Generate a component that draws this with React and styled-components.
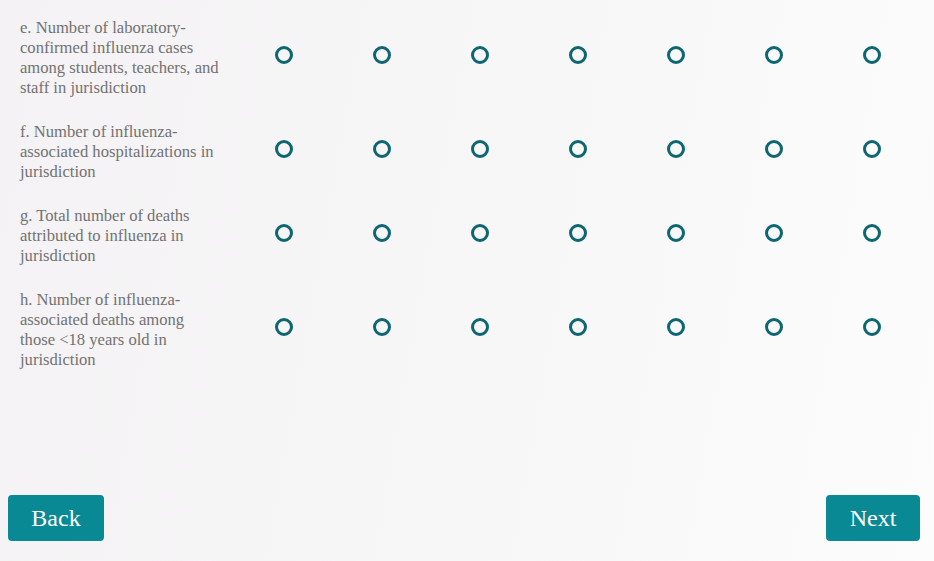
import styled, { createGlobalStyle } from "styled-components";

const GlobalStyle = createGlobalStyle`
  html, body {
    margin: 0;
    padding: 0;
  }
  body {
    font-family: "Liberation Serif", "Times New Roman", serif;
  }
`;

const Page = styled.div`
  width: 934px;
  height: 561px;
  box-sizing: border-box;
  display: flex;
  flex-direction: column;
  background: linear-gradient(100deg, #f4f2f4 0%, #f8f7f8 55%, #fcfcfc 100%);
  overflow: hidden;
`;

const Matrix = styled.div`
  display: flex;
  flex-direction: column;
  gap: 24px;
  padding: 18px 0 0 20px;
  flex: 1;
`;

const Row = styled.div`
  display: grid;
  grid-template-columns: 215px repeat(7, 98px);
  align-items: center;
`;

const Label = styled.div`
  width: 200px;
  font-size: 16.6px;
  line-height: 20px;
  color: #727272;
`;

const Cell = styled.div`
  display: flex;
  justify-content: center;
  align-items: center;
  margin-bottom: 6px;
`;

const Radio = styled.span`
  display: block;
  width: 18px;
  height: 18px;
  box-sizing: border-box;
  border: 3px solid #0d6670;
  border-radius: 50%;
  background: transparent;
`;

const Footer = styled.div`
  display: flex;
  justify-content: space-between;
  padding: 0 14px 20px 8px;
`;

const Button = styled.button`
  height: 46px;
  width: ${(p) => p.$w}px;
  border: none;
  border-radius: 4px;
  background-color: #088993;
  color: #ffffff;
  font-family: "Liberation Serif", "Times New Roman", serif;
  font-size: 24px;
  cursor: pointer;
  padding: 0;
`;

const rows = [
  "e. Number of laboratory-confirmed influenza cases among students, teachers, and staff in jurisdiction",
  "f. Number of influenza-associated hospitalizations in jurisdiction",
  "g. Total number of deaths attributed to influenza in jurisdiction",
  "h. Number of influenza-associated deaths among those <18 years old in jurisdiction",
];

const App = () => {
  return (
    <Page>
      <GlobalStyle />
      <Matrix>
        {rows.map((text) => (
          <Row key={text}>
            <Label>{text}</Label>
            {[0, 1, 2, 3, 4, 5, 6].map((i) => (
              <Cell key={i}>
                <Radio />
              </Cell>
            ))}
          </Row>
        ))}
      </Matrix>
      <Footer>
        <Button $w={96}>Back</Button>
        <Button $w={94}>Next</Button>
      </Footer>
    </Page>
  );
};

export default App;
